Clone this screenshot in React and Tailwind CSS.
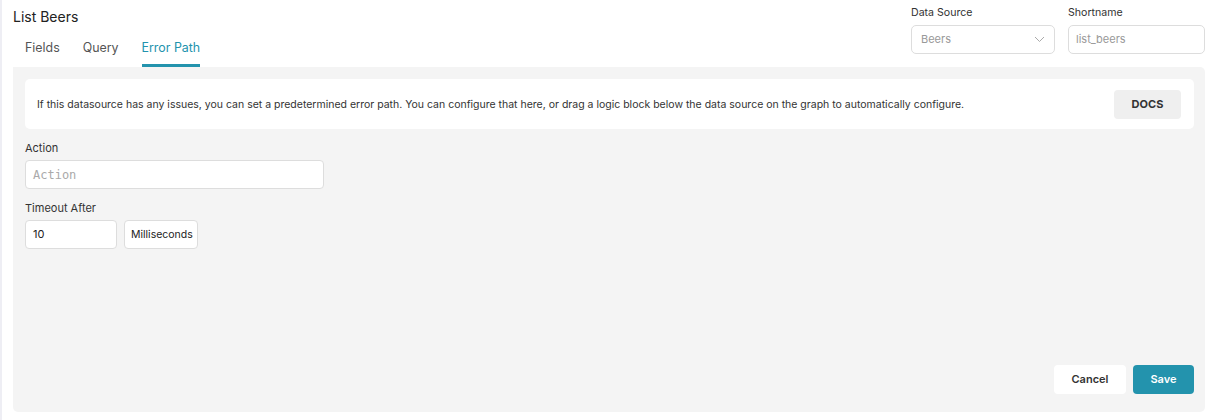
import React from "react";

const tabs = ["Fields", "Query", "Error Path"];

const App = () => {
    return (
        <div className="h-[420px] w-[1215px] bg-white border-l-2 border-[#eeeef4] font-['Inter',sans-serif] text-[#222]">
            <div className="flex h-full flex-col pl-[11px] pr-[10px] pb-[8px]">
                <div className="flex justify-between">
                    <div>
                        <h1 className="pt-[8px] text-[14px] leading-[18px] text-[#222]">List Beers</h1>
                        <div className="mt-[13px] flex gap-[23px] pl-[12px]">
                            {tabs.map((tab) => (
                                <div
                                    key={tab}
                                    className={
                                        tab === "Error Path"
                                            ? "border-b-[3px] border-[#2393ad] pb-[7px] text-[12.4px] leading-[18px] text-[#2393ad]"
                                            : "border-b-[3px] border-transparent pb-[7px] text-[12.4px] leading-[18px] text-[#555]"
                                    }
                                >
                                    {tab}
                                </div>
                            ))}
                        </div>
                    </div>
                    <div className="flex gap-[13px] pt-[6px]">
                        <div className="w-[144px]">
                            <div className="text-[10.6px] leading-[14px] text-[#333]">Data Source</div>
                            <div className="mt-[5px] flex h-[29px] items-center justify-between rounded-[5px] border border-[#ddd] px-[9px] text-[11px] text-[#999]">
                                <span>Beers</span>
                                <svg width="11" height="7" viewBox="0 0 11 7" fill="none" stroke="#aaa" strokeWidth="1">
                                    <path d="M1 1l4.5 4.5L10 1" />
                                </svg>
                            </div>
                        </div>
                        <div className="w-[137px]">
                            <div className="text-[10.6px] leading-[14px] text-[#333]">Shortname</div>
                            <div className="mt-[5px] flex h-[29px] items-center rounded-[5px] border border-[#ddd] px-[7px] text-[11px] text-[#999]">
                                list_beers
                            </div>
                        </div>
                    </div>
                </div>
                <div className="flex flex-1 flex-col rounded-b-[5px] rounded-tr-[5px] bg-[#f4f4f4] pl-[12px] pr-[11px] pt-[12px] pb-[18px]">
                    <div className="flex h-[50px] items-center justify-between rounded-[5px] bg-white pl-[12px] pr-[13px]">
                        <p className="pt-[1px] text-[10.5px] text-[#333]">
                            If this datasource has any issues, you can set a predetermined error path. You can configure that here, or drag a logic block below the data source on the graph to automatically configure.
                        </p>
                        <button className="h-[29px] w-[67px] rounded-[4px] bg-[#efefef] text-[11px] font-bold text-[#333]">DOCS</button>
                    </div>
                    <label className="mt-[12px] text-[11px] leading-[14px] text-[#333]">Action</label>
                    <div className="mt-[5px] flex h-[29px] w-[299px] items-center rounded-[4px] border border-[#ddd] bg-white px-[7px] pt-[1px] font-['DejaVu_Sans_Mono',monospace] text-[12px] text-[#aaa]">
                        Action
                    </div>
                    <label className="mt-[12px] text-[11px] leading-[14px] text-[#333]">Timeout After</label>
                    <div className="mt-[5px] flex gap-[7px]">
                        <div className="flex h-[29px] w-[92px] items-center rounded-[4px] border border-[#ddd] bg-white px-[7px] text-[11px] text-[#222]">10</div>
                        <div className="flex h-[29px] w-[74px] items-center overflow-hidden rounded-[4px] border border-[#ddd] bg-white pl-[6px] text-[10.5px] whitespace-nowrap text-[#222]">
                            Milliseconds
                        </div>
                    </div>
                    <div className="mt-auto flex justify-end gap-[7px]">
                        <button className="h-[29px] w-[72px] rounded-[4px] bg-white text-[11px] font-semibold text-[#333]">Cancel</button>
                        <button className="h-[29px] w-[61px] rounded-[4px] bg-[#2393ad] text-[11px] font-semibold text-white">Save</button>
                    </div>
                </div>
            </div>
        </div>
    );
};

export default App;
